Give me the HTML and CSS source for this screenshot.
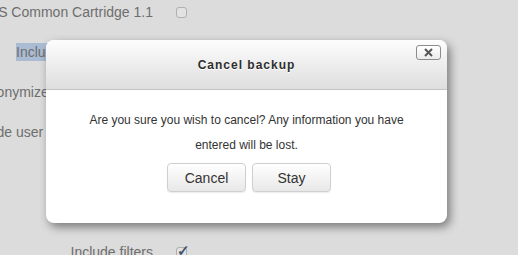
FILE: index.html
```html
<!DOCTYPE html>
<html lang="en">
<head>
    <meta charset="UTF-8">
    <title>Cancel backup</title>
    <link rel="stylesheet" href="styles.css">
</head>
<body>
    <div class="settings">
        <div class="row">
            <div class="label">IMS Common Cartridge 1.1</div>
            <span class="check"></span>
        </div>
        <div class="row">
            <div class="label"><span class="picked">Include enrolled users</span></div>
            <span class="check on"></span>
        </div>
        <div class="row">
            <div class="label">Anonymize user information</div>
            <span class="check"></span>
        </div>
        <div class="row">
            <div class="label">Include user role assignments</div>
            <span class="check on"></span>
        </div>
        <div class="row">
            <div class="label">Include activities</div>
            <span class="check on"></span>
        </div>
        <div class="row">
            <div class="label">Include blocks</div>
            <span class="check on"></span>
        </div>
        <div class="row">
            <div class="label">Include filters</div>
            <span class="check on">&#10003;</span>
        </div>
    </div>

    <!-- confirm dialog -->
    <div class="dialog">
        <div class="dialog-head">
            <h3>Cancel backup</h3>
            <button class="close" title="Close">
                <svg width="9" height="9" viewBox="0 0 9 9"><path d="M1 1L8 8M8 1L1 8" stroke="#555" stroke-width="2"/></svg>
            </button>
        </div>
        <div class="dialog-body">
            <p>Are you sure you wish to cancel? Any information you have entered will be lost.</p>
            <div class="actions">
                <button class="btn">Cancel</button>
                <button class="btn">Stay</button>
            </div>
        </div>
    </div>
</body>
</html>
```

FILE: styles.css
```css
body {
    margin: 0;
    background: #dcdcdc;
    font-family: 'Liberation Sans', Arial, sans-serif;
    overflow: hidden;
    height: 255px;
}
.settings {
    margin-top: -8px;
    height: 263px;
    overflow: hidden;
}
.row {
    display: flex;
    align-items: center;
    height: 40px;
}
.label {
    width: 153px;
    flex: none;
    display: flex;
    justify-content: flex-end;
    white-space: nowrap;
    font-size: 14px;
    color: #6e6e6e;
}
.picked {
    background: #aabcd3;
    padding: 1px 0;
}
.check {
    width: 11px;
    height: 11px;
    margin-left: 23px;
    border: 1px solid #b0b0b0;
    border-radius: 3px;
    background: #e2e2e2;
    box-sizing: border-box;
    font-size: 15px;
    line-height: 6px;
    font-weight: bold;
    color: #44546e;
}
.dialog {
    position: absolute;
    left: 46px;
    top: 40px;
    width: 401px;
    height: 183px;
    background: #fff;
    border-radius: 8px;
    box-shadow: 3px 4px 10px rgba(0,0,0,0.45);
    overflow: hidden;
}
.dialog-head {
    position: relative;
    height: 50px;
    background: linear-gradient(#fdfdfd, #dedede);
    border-bottom: 1px solid #c4c4c4;
    box-sizing: border-box;
}
.dialog-head h3 {
    margin: 0;
    text-align: center;
    line-height: 50px;
    font-size: 12px;
    letter-spacing: 1px;
    color: #2e2e2e;
    text-shadow: 0 1px 0 #fff;
}
.close {
    position: absolute;
    right: 6px;
    top: 5px;
    width: 25px;
    height: 15px;
    padding: 0;
    border: 1px solid #8c8c8c;
    border-radius: 3px;
    background: linear-gradient(#fff, #ececec);
    display: flex;
    align-items: center;
    justify-content: center;
}
.dialog-body {
    padding: 18px 20px 0;
    text-align: center;
}
.dialog-body p {
    margin: 0 auto;
    width: 340px;
    font-size: 12px;
    line-height: 25px;
    color: #333;
}
.actions {
    display: flex;
    justify-content: center;
    gap: 6px;
    margin-top: 5px;
    padding-left: 5px;
}
.btn {
    width: 79px;
    height: 29px;
    border: 1px solid #cfcfcf;
    border-radius: 4px;
    background: linear-gradient(#fff, #e8e8e8);
    box-shadow: 0 1px 1px rgba(0,0,0,0.08);
    font-family: 'Liberation Sans', Arial, sans-serif;
    font-size: 14px;
    color: #333;
    padding: 0;
}
```
